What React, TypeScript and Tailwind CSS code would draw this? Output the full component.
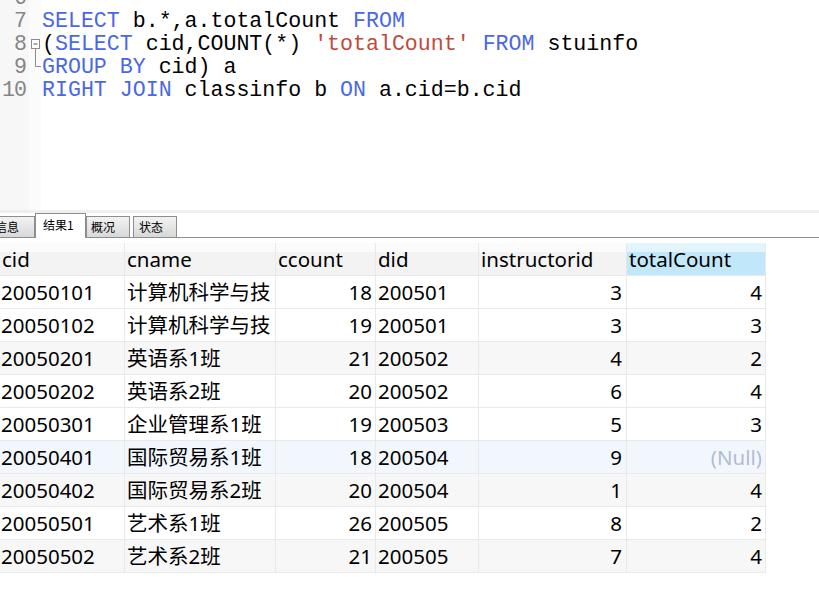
import React from 'react';

type Tok = [string, 'kw' | 'str' | 'txt'];

interface Row {
  cid: string;
  cname: string;
  ccount: number;
  did: string;
  instructorid: number;
  totalCount: number | null;
  shade?: boolean;
}

const CODE: { num: number; toks: Tok[] }[] = [
  { num: 6, toks: [] },
  { num: 7, toks: [['SELECT', 'kw'], [' b.*,a.totalCount ', 'txt'], ['FROM', 'kw']] },
  {
    num: 8,
    toks: [
      ['(', 'txt'],
      ['SELECT', 'kw'],
      [' cid,COUNT(*) ', 'txt'],
      ["'totalCount'", 'str'],
      [' ', 'txt'],
      ['FROM', 'kw'],
      [' stuinfo', 'txt'],
    ],
  },
  { num: 9, toks: [['GROUP BY', 'kw'], [' cid) a', 'txt']] },
  {
    num: 10,
    toks: [['RIGHT JOIN', 'kw'], [' classinfo b ', 'txt'], ['ON', 'kw'], [' a.cid=b.cid', 'txt']],
  },
];

const ROWS: Row[] = [
  { cid: '20050101', cname: '计算机科学与技', ccount: 18, did: '200501', instructorid: 3, totalCount: 4 },
  { cid: '20050102', cname: '计算机科学与技', ccount: 19, did: '200501', instructorid: 3, totalCount: 3 },
  { cid: '20050201', cname: '英语系1班', ccount: 21, did: '200502', instructorid: 4, totalCount: 2, shade: true },
  { cid: '20050202', cname: '英语系2班', ccount: 20, did: '200502', instructorid: 6, totalCount: 4 },
  { cid: '20050301', cname: '企业管理系1班', ccount: 19, did: '200503', instructorid: 5, totalCount: 3 },
  { cid: '20050401', cname: '国际贸易系1班', ccount: 18, did: '200504', instructorid: 9, totalCount: null },
  { cid: '20050402', cname: '国际贸易系2班', ccount: 20, did: '200504', instructorid: 1, totalCount: 4, shade: true },
  { cid: '20050501', cname: '艺术系1班', ccount: 26, did: '200505', instructorid: 8, totalCount: 2 },
  { cid: '20050502', cname: '艺术系2班', ccount: 21, did: '200505', instructorid: 7, totalCount: 4, shade: true },
];

const COLS = ['cid', 'cname', 'ccount', 'did', 'instructorid', 'totalCount'];
const GRID = 'grid grid-cols-[125px_151px_100px_103px_148px_139px]';
const CELL = 'h-[33px] flex items-center border-r border-b border-[#e9e9e9] overflow-hidden whitespace-nowrap';

const tokClass = (k: Tok[1]) =>
  k === 'kw' ? 'text-[#4a68e6]' : k === 'str' ? 'text-[#c24a3c]' : 'text-black';

// fold marker pieces in the gutter
const FoldMark: React.FC<{ num: number }> = ({ num }) => {
  if (num === 8) {
    return (
      <svg width="12" height="23" viewBox="0 0 12 23">
        <rect x="2.5" y="6.5" width="8" height="9" fill="#fff" stroke="#8c8c8c" />
        <line x1="4.5" y1="11" x2="8.5" y2="11" stroke="#555" />
        <line x1="6.5" y1="15.5" x2="6.5" y2="23" stroke="#8c8c8c" />
      </svg>
    );
  }
  if (num === 9) {
    return (
      <svg width="12" height="23" viewBox="0 0 12 23">
        <polyline points="6.5,0 6.5,10.5 12,10.5" fill="none" stroke="#8c8c8c" />
      </svg>
    );
  }
  return <div className="h-[23px]" />;
};

export default function App() {
  return (
    <div className="w-[819px] h-[593px] overflow-hidden bg-white">
      {/* SQL editor */}
      <div className="h-[210px] flex overflow-hidden font-['Liberation_Mono',monospace] text-[21.6px] leading-[23px]">
        <div className="w-[29px] bg-[#f7f7f7] pr-[3px] text-right text-[#858585]">
          <div className="mt-[-13px]">
            {CODE.map((l) => (
              <div key={l.num} className="h-[23px] tracking-[-1px]">
                {l.num}
              </div>
            ))}
          </div>
        </div>
        <div className="w-[12px] bg-[#fbfbfb]">
          <div className="mt-[-13px]">
            {CODE.map((l) => (
              <FoldMark key={l.num} num={l.num} />
            ))}
          </div>
        </div>
        <div className="flex-1 pl-[1px] whitespace-pre">
          <div className="mt-[-13px]">
            {CODE.map((l) => (
              <div key={l.num} className="h-[23px]">
                {l.toks.map(([t, k], i) => (
                  <span key={i} className={tokClass(k)}>
                    {t}
                  </span>
                ))}
              </div>
            ))}
          </div>
        </div>
      </div>
      <div className="h-[3px] bg-[#efefef]" />

      {/* result tabs */}
      <div className="h-[25px] flex items-end border-b border-[#8e8e8e] font-['Noto_Sans_CJK_SC',sans-serif] text-[12px] text-black">
        <div className="ml-[-10px] w-[45px] h-[21px] pl-[4px] flex items-center border border-b-0 border-[#8e8e8e] bg-linear-to-b from-[#f3f3f3] to-[#d8d8d8]">
          信息
        </div>
        <div className="w-[51px] h-[25px] mb-[-1px] pl-[7px] pb-[2px] flex items-center border border-b-0 border-[#8e8e8e] bg-white">
          结果1
        </div>
        <div className="w-[44px] h-[21px] pl-[4px] flex items-center border border-b-0 border-[#8e8e8e] bg-linear-to-b from-[#f3f3f3] to-[#d8d8d8]">
          概况
        </div>
        <div className="ml-[3px] w-[44px] h-[21px] pl-[5px] flex items-center border border-b-0 border-[#8e8e8e] bg-linear-to-b from-[#f3f3f3] to-[#d8d8d8]">
          状态
        </div>
      </div>

      {/* result grid */}
      <div className="mt-[5px] w-[766px] font-['Noto_Sans','Noto_Sans_CJK_SC',sans-serif] text-[20.5px] text-black">
        <div className={GRID}>
          {COLS.map((c) => (
            <div
              key={c}
              className={`${CELL} pl-[2px] ${
                c === 'totalCount'
                  ? 'bg-[linear-gradient(to_bottom,#e3f5fc_9px,#c1e7fa_9px)]'
                  : 'bg-[linear-gradient(to_bottom,#fbfbfb_9px,#f3f3f3_9px)]'
              }`}
            >
              {c}
            </div>
          ))}
        </div>
        {ROWS.map((r) => {
          const bg = r.totalCount === null ? 'bg-[#f2f7fd]' : r.shade ? 'bg-[#f7f7f7]' : 'bg-white';
          return (
            <div key={r.cid} className={`${GRID} ${bg}`}>
              <div className={`${CELL} pl-[1px]`}>{r.cid}</div>
              <div className={`${CELL} pl-[2px]`}>{r.cname}</div>
              <div className={`${CELL} justify-end pr-[3px]`}>{r.ccount}</div>
              <div className={`${CELL} pl-[2px]`}>{r.did}</div>
              <div className={`${CELL} justify-end pr-[4px]`}>{r.instructorid}</div>
              <div className={`${CELL} justify-end pr-[3px]`}>
                {r.totalCount === null ? <span className="text-[#b3bbd3]">(Null)</span> : r.totalCount}
              </div>
            </div>
          );
        })}
      </div>
    </div>
  );
}
